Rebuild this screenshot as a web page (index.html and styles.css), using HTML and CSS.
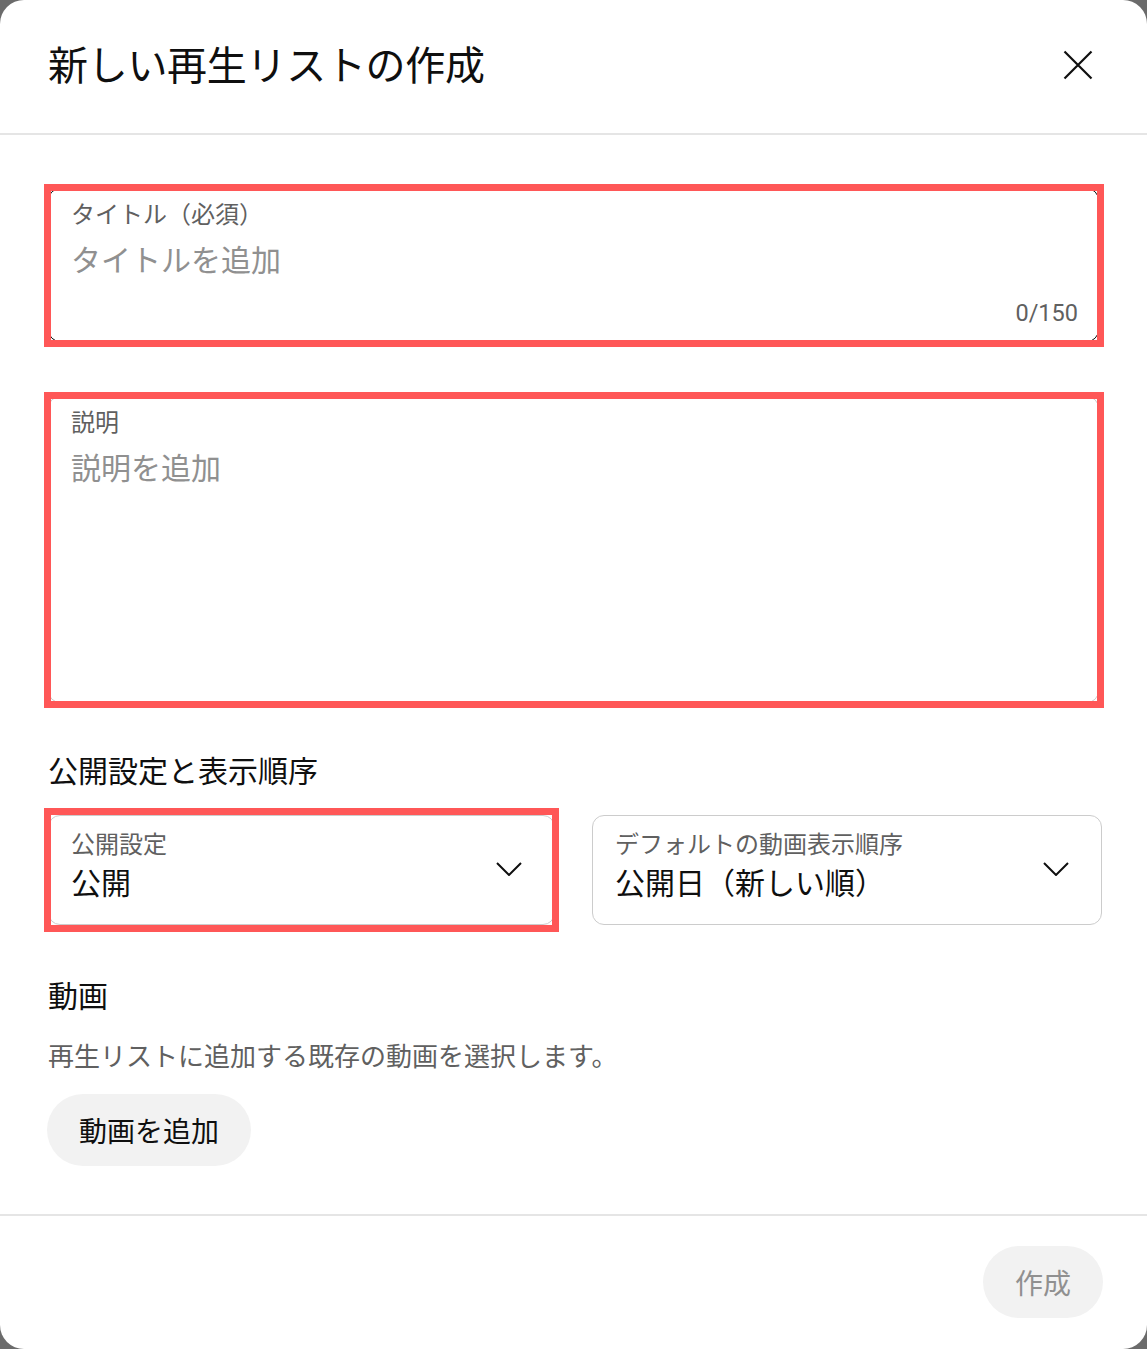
FILE: index.html
```html
<!DOCTYPE html>
<html lang="ja">
<head>
    <meta charset="UTF-8">
    <meta name="viewport" content="width=device-width, initial-scale=1.0">
    <title>新しい再生リストの作成</title>
    <link rel="stylesheet" href="styles.css">
</head>
<body>
    <div class="dialog">
        <div class="dialog-header">
            <h1 class="dialog-title">新しい再生リストの作成</h1>
            <button class="close-btn" aria-label="閉じる">
                <svg width="30" height="30" viewBox="0 0 30 30">
                    <path d="M1.5 1.5 L28.5 28.5 M28.5 1.5 L1.5 28.5" stroke="#0f0f0f" stroke-width="2.2" fill="none"/>
                </svg>
            </button>
        </div>

        <div class="dialog-body">
            <div class="field field-title marked">
                <div class="field-label">タイトル（必須）</div>
                <div class="field-placeholder">タイトルを追加</div>
                <div class="field-counter">0/150</div>
            </div>

            <div class="field field-desc marked">
                <div class="field-label">説明</div>
                <div class="field-placeholder">説明を追加</div>
            </div>

            <h2 class="section-title order-title">公開設定と表示順序</h2>
            <div class="select-row">
                <div class="select marked-select">
                    <div class="select-text">
                        <div class="field-label">公開設定</div>
                        <div class="select-value">公開</div>
                    </div>
                    <svg class="chevron" width="26" height="14" viewBox="0 0 26 14">
                        <path d="M1 1 L13 13 L25 1" stroke="#0f0f0f" stroke-width="2" fill="none"/>
                    </svg>
                </div>
                <div class="select">
                    <div class="select-text">
                        <div class="field-label">デフォルトの動画表示順序</div>
                        <div class="select-value">公開日（新しい順）</div>
                    </div>
                    <svg class="chevron" width="26" height="14" viewBox="0 0 26 14">
                        <path d="M1 1 L13 13 L25 1" stroke="#0f0f0f" stroke-width="2" fill="none"/>
                    </svg>
                </div>
            </div>

            <h2 class="section-title videos-title">動画</h2>
            <p class="section-note">再生リストに追加する既存の動画を選択します。</p>
            <button class="pill-btn">動画を追加</button>
        </div>

        <div class="dialog-footer">
            <button class="pill-btn disabled">作成</button>
        </div>
    </div>
</body>
</html>
```

FILE: styles.css
```css
body {
    margin: 0;
    background: #6b6b6b;
    font-family: 'Roboto', 'Noto Sans CJK JP', sans-serif;
    color: #0f0f0f;
}

.dialog {
    background: #fff;
    border-radius: 24px;
    height: 1349px;
    display: flex;
    flex-direction: column;
    overflow: hidden;
}

.dialog-header {
    display: flex;
    align-items: center;
    justify-content: space-between;
    height: 133px;
    padding: 0 54px 0 48px;
    border-bottom: 2px solid #e5e5e5;
}

.dialog-title {
    margin: 0;
    font-size: 40px;
    font-weight: 400;
    line-height: 1;
    letter-spacing: -0.3px;
}

.close-btn {
    background: none;
    border: none;
    padding: 0;
    display: flex;
    margin-top: -4px;
}

.dialog-body {
    padding: 53px 45px 48px 48px;
    border-bottom: 2px solid #e5e5e5;
}

.field {
    position: relative;
    box-sizing: border-box;
    border: 1.5px solid #ccc;
    border-radius: 12px;
    padding: 10px 22px 0 22px;
    margin-right: 3px;
}

/* red annotation frames drawn over the fields */
.marked::after,
.marked-select::after {
    content: "";
    position: absolute;
    border: 7px solid #ff5757;
    pointer-events: none;
}

.marked::after {
    top: -5.5px;
    left: -5.5px;
    right: -5.5px;
    bottom: -5.5px;
}

.marked-select::after {
    top: -8.5px;
    left: -5.5px;
    right: -4.5px;
    bottom: -7.5px;
}

.field-title {
    height: 154px;
    border-color: #0f0f0f;
}

.field-desc {
    height: 307px;
    margin-top: 54px;
}

.field-label {
    font-size: 24px;
    color: #606060;
    line-height: 32px;
}

.field-placeholder {
    font-size: 30px;
    color: #909090;
    line-height: 40px;
    margin-top: 10px;
}

.field-counter {
    position: absolute;
    right: 20px;
    bottom: 12px;
    font-size: 23.5px;
    color: #606060;
    line-height: 32px;
}

.section-title {
    margin: 0;
    font-size: 30px;
    font-weight: 400;
    line-height: 40px;
}

.order-title {
    margin-top: 49px;
    margin-bottom: 23px;
}

.select-row {
    display: grid;
    grid-template-columns: 507px 1fr;
    gap: 37px;
}

.select {
    position: relative;
    box-sizing: border-box;
    height: 110px;
    border: 1.5px solid #ccc;
    border-radius: 12px;
    display: flex;
    align-items: center;
    justify-content: space-between;
    padding: 0 32px 0 22px;
}

.select-text {
    margin-top: -8px;
}

.select-value {
    font-size: 30px;
    line-height: 40px;
    margin-top: 3px;
}

.chevron {
    margin-top: -2px;
}

.videos-title {
    margin-top: 52px;
}

.section-note {
    margin: 22px 0 19px;
    font-size: 26px;
    color: #606060;
    line-height: 36px;
}

.pill-btn {
    font-family: inherit;
    font-size: 28px;
    color: #0f0f0f;
    background: #f2f2f2;
    border: none;
    border-radius: 36px;
    height: 72px;
    padding: 0 32px;
    margin-left: -1px;
    display: block;
}

.dialog-footer {
    display: flex;
    justify-content: flex-end;
    padding: 30px 44px 0 0;
}

.pill-btn.disabled {
    color: #909090;
    width: 120px;
    padding: 0;
}
```
